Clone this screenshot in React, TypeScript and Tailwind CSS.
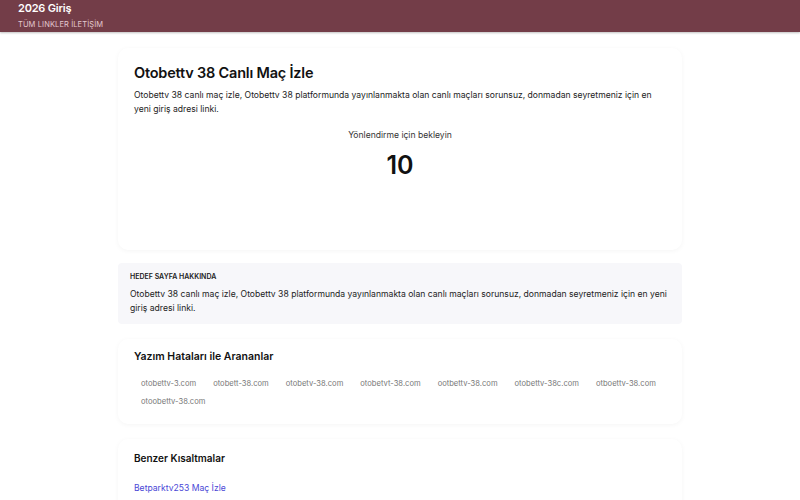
import React from 'react';

const typos = [
  'otobettv-3.com',
  'otobett-38.com',
  'otobetv-38.com',
  'otobetvt-38.com',
  'ootbettv-38.com',
  'otobettv-38c.com',
  'otboettv-38.com',
  'otoobettv-38.com',
];

const description =
  'Otobettv 38 canlı maç izle, Otobettv 38 platformunda yayınlanmakta olan canlı maçları sorunsuz, donmadan seyretmeniz için en yeni giriş adresi linki.';

const App: React.FC = () => {
  return (
    <div className="min-h-screen bg-white text-[#1a1a1a]" style={{ fontFamily: 'Inter, "Noto Sans", sans-serif' }}>
      {/* top bar */}
      <header className="h-[32px] bg-[#733d48] px-[18px] pt-[1px] shadow-[0_1px_2px_rgba(0,0,0,0.25)]">
        <div className="text-[11px] font-semibold leading-[14px] text-white tracking-[-0.2px]">2026 Giriş</div>
        <div className="mt-[5px] text-[7.5px] leading-[10px] text-[#e3c9cf] tracking-[0.1px]">TÜM LINKLER İLETİŞİM</div>
      </header>

      <main className="mx-auto flex w-[564px] flex-col pt-[16px]">
        {/* redirect card */}
        <section className="h-[202px] rounded-[10px] bg-white px-[16px] pt-[15px] shadow-[0_1px_5px_rgba(0,0,0,0.045)]">
          <h1 className="text-[14.5px] font-semibold leading-[20px] tracking-[-0.2px] text-[#111]">
            Otobettv 38 Canlı Maç İzle
          </h1>
          <p className="mt-[5px] text-[8.6px] leading-[14px] text-[#222]">{description}</p>
          <div className="mt-[13px] text-center text-[8.6px] leading-[12px] text-[#333]">Yönlendirme için bekleyin</div>
          <div className="mt-[9px] text-center text-[25px] font-semibold leading-[30px] text-[#111]">10</div>
        </section>

        {/* about target */}
        <section className="mt-[13px] rounded-[4px] bg-[#f7f7fa] px-[12px] pt-[9px] pb-[9px]">
          <div className="text-[7px] font-semibold leading-[10px] text-[#222]">HEDEF SAYFA HAKKINDA</div>
          <p className="mt-[5px] text-[8.6px] leading-[14px] text-[#222]">{description}</p>
        </section>

        {/* typo searches */}
        <section className="mt-[15px] rounded-[10px] bg-white px-[16px] pt-[11px] pb-[13px] shadow-[0_1px_5px_rgba(0,0,0,0.045)]">
          <h2 className="text-[10.5px] font-semibold leading-[14px] text-[#111]">Yazım Hataları ile Arananlar</h2>
          <div className="mt-[11px] flex flex-wrap gap-x-[17px] pl-[7px]">
            {typos.map((t) => (
              <span key={t} className="py-[2px] text-[7.6px] leading-[14px] text-[#777]">
                {t}
              </span>
            ))}
          </div>
        </section>

        {/* similar short links */}
        <section className="mt-[15px] rounded-[10px] bg-white px-[16px] pt-[12px] pb-[16px] shadow-[0_1px_5px_rgba(0,0,0,0.045)]">
          <h2 className="text-[10px] font-semibold leading-[14px] text-[#111]">Benzer Kısaltmalar</h2>
          <a href="#" className="mt-[17px] block text-[8.6px] leading-[12px] text-[#4a47d6]">
            Betparktv253 Maç İzle
          </a>
        </section>
      </main>
    </div>
  );
};

export default App;
